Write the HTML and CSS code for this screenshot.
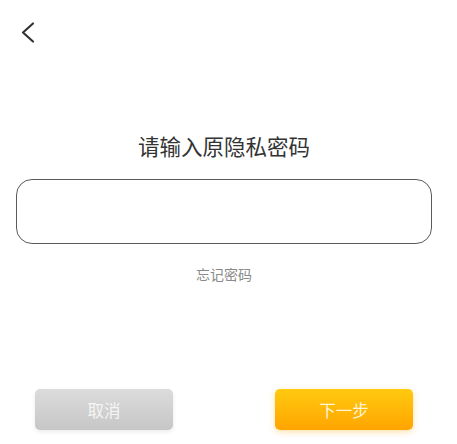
FILE: index.html
```html
<!DOCTYPE html>
<html lang="zh-CN">
<head>
<meta charset="utf-8">
<title>请输入原隐私密码</title>
<link rel="stylesheet" href="styles.css">
</head>
<body>
<div class="page">
  <div class="top-bar">
    <svg class="back" width="20" height="28" viewBox="0 0 20 28">
      <polyline points="13,3.5 3,12.5 13,21.5" fill="none" stroke="#333" stroke-width="2.2" stroke-linecap="round" stroke-linejoin="round"/>
    </svg>
  </div>
  <div class="title">请输入原隐私密码</div>
  <div class="input-box"></div>
  <div class="forgot">忘记密码</div>
  <div class="actions">
    <button class="btn btn-cancel">取消</button>
    <button class="btn btn-next">下一步</button>
  </div>
</div>
</body>
</html>
```

FILE: styles.css
```css
html, body {
  margin: 0;
  padding: 0;
  background: #ffffff;
}
body {
  font-family: "Noto Sans CJK SC", "Noto Sans", sans-serif;
}
.page {
  width: 448px;
  height: 444px;
  display: flex;
  flex-direction: column;
  overflow: hidden;
}
.top-bar {
  height: 64px;
  box-sizing: border-box;
  padding-left: 20px;
  padding-top: 20px;
}
.back {
  display: block;
}
.title {
  margin-top: 67px;
  text-align: center;
  font-size: 21.5px;
  line-height: 30px;
  color: #333333;
}
.input-box {
  margin: 18px 16px 0 16px;
  height: 65px;
  box-sizing: border-box;
  border: 1.3px solid #5a5a5a;
  border-radius: 16px;
}
.forgot {
  margin-top: 20px;
  text-align: center;
  font-size: 14px;
  line-height: 20px;
  color: #8a8a8a;
}
.actions {
  margin-top: 105px;
  display: flex;
  padding-left: 35px;
  gap: 102px;
}
.btn {
  width: 138px;
  height: 41px;
  border: none;
  border-radius: 5px;
  font-family: "Noto Sans CJK SC", "Noto Sans", sans-serif;
  font-size: 16.5px;
  padding: 0;
}
.btn-cancel {
  background: linear-gradient(#dcdcdc, #c6c6c6);
  color: #f5f5f5;
  box-shadow: 0 2px 4px rgba(0, 0, 0, 0.08);
}
.btn-next {
  background: linear-gradient(#ffca10, #ffa400);
  color: #fff4d6;
  box-shadow: 0 2px 6px rgba(255, 166, 0, 0.35);
}
```
